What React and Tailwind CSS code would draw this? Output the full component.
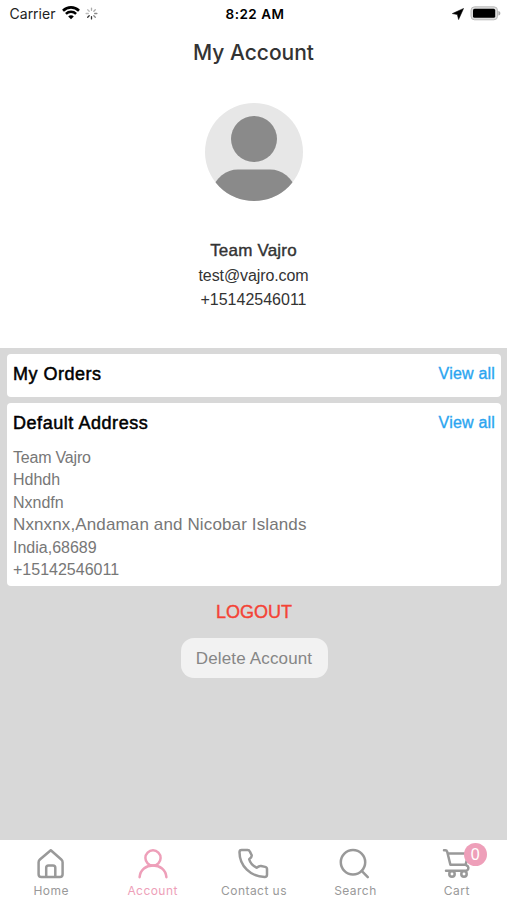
const helv = "font-['Liberation_Sans',Arial,sans-serif]";
const inter = "font-['Inter',sans-serif]";

function StatusBar() {
  return (
    <div className={`flex h-7 items-center justify-between pl-[9px] pr-[6px] text-black ${inter}`}>
      <div className="flex w-[150px] items-center">
        <span className="w-[47px] whitespace-nowrap text-[14px] leading-7 text-[#222]">Carrier</span>
        <svg className="-mt-[2px] ml-[6px]" width="18" height="14" viewBox="0 0 18 14" fill="none">
          <path d="M1 4.7C5.6.2 12.4.2 17 4.7" stroke="#000" strokeWidth="2.6" />
          <path d="M3.9 7.9C6.8 5.1 11.2 5.1 14.1 7.9" stroke="#000" strokeWidth="2.5" />
          <path d="M6.2 10.4C7.8 9 10.2 9 11.8 10.4L9 13.3Z" fill="#000" />
        </svg>
        <svg className="-mt-[2px] ml-[5px]" width="13" height="13" viewBox="-6.5 -6.5 13 13" strokeWidth="1.3" strokeLinecap="round">
          <path d="M0-3.2V-5.4M2.3-2.3L3.8-3.8" stroke="#aaa" />
          <path d="M3.2 0H5.4M2.3 2.3L3.8 3.8" stroke="#888" />
          <path d="M0 3.2V5.4M-2.3 2.3L-3.8 3.8" stroke="#333" />
          <path d="M-3.2 0H-5.4M-2.3-2.3L-3.8-3.8" stroke="#bbb" />
        </svg>
      </div>
      <span className="text-[13.5px] font-semibold leading-7 tracking-[0.5px]">8:22 AM</span>
      <div className="flex w-[150px] items-center justify-end gap-[6px]">
        <svg width="12" height="12" viewBox="0 0 12 12"><path d="M11.6.4L.3 5.6L5.3 6.6L6.6 11.6Z" fill="#000" stroke="#000" strokeWidth=".5" strokeLinejoin="round" /></svg>
        <svg className="-mt-[2px]" width="31" height="15" viewBox="0 0 31 15">
          <rect x="1" y=".8" width="26.5" height="13" rx="3.6" fill="#ddd" stroke="#bbb" strokeWidth="1" />
          <rect x="3" y="2.8" width="22.2" height="9" rx="1.6" fill="#000" />
          <path d="M28.4 5C31 5.7 31 8.9 28.4 9.6Z" fill="#aaa" />
        </svg>
      </div>
    </div>
  );
}

function Avatar() {
  return (
    <svg className="mx-auto block" width="98" height="98" viewBox="0 0 98 98">
      <defs><clipPath id="avatar"><circle cx="49" cy="49" r="49" /></clipPath></defs>
      <g clipPath="url(#avatar)">
        <rect width="98" height="98" fill="#e7e7e7" />
        <circle cx="49" cy="36" r="23" fill="#8a8a8a" />
        <path d="M5 98V90C11 74 21 66.5 33 66.5H65C77 66.5 87 74 93 90V98Z" fill="#8a8a8a" />
      </g>
    </svg>
  );
}

function CardHeader({ title, spacing }) {
  return (
    <div className="flex items-center justify-between">
      <h2 className={`text-[18px] leading-[22px] text-black [-webkit-text-stroke:0.5px_#000] ${spacing}`}>{title}</h2>
      <a className="pt-px text-[16px] leading-[22px] tracking-[0.2px] text-[#2ba5f0] [-webkit-text-stroke:0.35px_#2ba5f0]">View all</a>
    </div>
  );
}

function Tab({ label, active, children }) {
  return (
    <div className={`flex flex-1 flex-col items-center ${active ? "text-[#ee9fb9]" : "text-[#999]"}`}>
      <svg className="ml-px" width="34" height="34" viewBox="0 0 34 34" fill="none" stroke="currentColor" strokeWidth="2.5" strokeLinejoin="round" strokeLinecap="round">{children}</svg>
      <span className={`mt-[3px] whitespace-nowrap pl-px text-[12px] leading-[14px] tracking-[0.45px] ${inter}`}>{label}</span>
    </div>
  );
}

export default function App() {
  return (
    <div className={`flex h-[900px] w-[507px] flex-col overflow-hidden bg-[#d8d8d8] ${helv}`}>
      <header className="h-[348px] bg-white text-center">
        <StatusBar />
        <h1 className={`mt-[9px] h-[30px] pt-px text-[21px] font-medium leading-[30px] text-[#333] ${inter}`}>My Account</h1>
        <div className="pt-[36px]"><Avatar /></div>
        <div className="mt-[38px] leading-6 text-[#333]">
          <p className="text-[17px] tracking-[0.2px] [-webkit-text-stroke:0.4px_#333]">Team Vajro</p>
          <p className="pt-px text-[16px] leading-[24px] tracking-[-0.1px]">test@vajro.com</p>
          <p className="text-[16px]">+15142546011</p>
        </div>
      </header>
      <main className="flex-1 pl-[7px] pr-[6px] pt-[6px]">
        <section className="h-[43px] rounded-[4px] bg-white px-[6px] pt-[8px]">
          <CardHeader title="My Orders" spacing="tracking-[0.5px]" />
        </section>
        <section className="mt-[6px] h-[183px] rounded-[4px] bg-white px-[6px] pt-[8px]">
          <CardHeader title="Default Address" spacing="tracking-[0.55px]" />
          <div className="mt-[13px] text-[16px] leading-[22.4px] text-[#777]">
            <p className="tracking-[-0.2px]">Team Vajro</p>
            <p>Hdhdh</p>
            <p>Nxndfn</p>
            <p className="text-[17px] tracking-[0.13px]">Nxnxnx,Andaman and Nicobar Islands</p>
            <p>India,68689</p>
            <p>+15142546011</p>
          </div>
        </section>
        <div className="flex flex-col items-center">
          <button className="mt-[14px] text-[18px] leading-6 text-[#f44336] [-webkit-text-stroke:0.4px_#f44336]">LOGOUT</button>
          <button className="mt-[14px] h-[40px] w-[147px] rounded-[13px] bg-[#f2f2f2] pt-[2px] text-[17px] tracking-[0.15px] text-[#868686]">Delete Account</button>
        </div>
      </main>
      <nav className="flex h-[60px] bg-white pt-[7px]">
        <Tab label="Home">
          <path d="M16.8 3.2L27.3 12.5C28.2 13.3 28.6 14 28.6 15.2V27.2C28.6 29 27.6 30 25.8 30H7.4C5.6 30 4.6 29 4.6 27.2V15.2C4.6 14 5 13.3 5.9 12.5Z" />
          <path d="M12.2 29.5V20.7C12.2 19.2 13 18.4 14.5 18.4H19C20.5 18.4 21.3 19.2 21.3 20.7V29.5" />
        </Tab>
        <Tab label="Account" active>
          <circle cx="17" cy="10.9" r="7.6" />
          <path d="M3.6 30.2C4.3 22.5 10 18.6 17 18.6S29.7 22.5 30.4 30.2" />
        </Tab>
        <Tab label="Contact us">
          <path d="M4.6 3H10.6C11.8 3 12.5 3.6 12.9 4.6L14.6 8C15.1 9.3 14.8 10.2 12.2 12.3C13.2 16.2 15.8 18.9 19.6 20.7C21.8 19 22.6 18.7 24 19L28.2 19.9C29.4 20.2 30 20.9 30 22.1V27.8C30 29.3 29.2 30 27.7 30C13.7 30 2.5 18.7 2.5 5.2C2.5 3.8 3.1 3 4.6 3Z" />
        </Tab>
        <Tab label="Search">
          <circle cx="15" cy="15.3" r="12.2" />
          <path d="M23.9 24.2L29.8 30.2" />
        </Tab>
        <div className="relative flex flex-1">
          <Tab label="Cart">
            <path d="M4 3.3H5.4C6.4 3.3 6.9 3.8 7.2 4.8L10.4 17.7H25.6L28.7 6.6H7.7M25.6 17.7L27.8 19.3C29 21 28.2 23.8 26 23.8H6" />
            <circle cx="12" cy="27" r="2.7" /><circle cx="24" cy="27" r="2.7" />
          </Tab>
          <span className="absolute left-[58px] top-[-4px] flex h-[23px] w-[23px] items-center justify-center rounded-full bg-[#ee9fb9] text-[16px] text-white">0</span>
        </div>
      </nav>
    </div>
  );
}
